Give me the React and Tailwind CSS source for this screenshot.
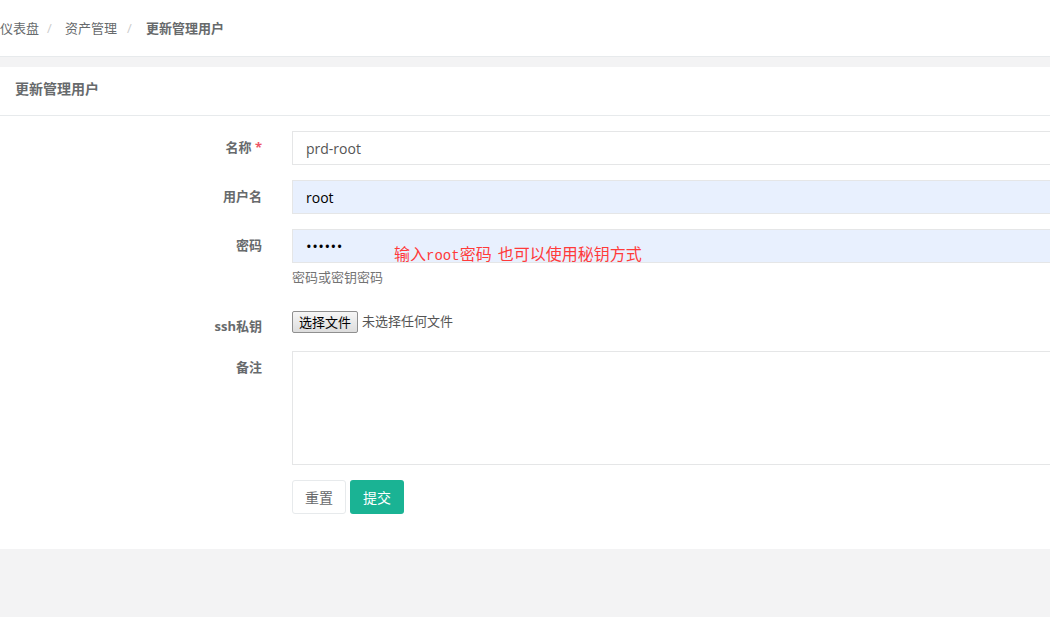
export default function App() {
  const font = { fontFamily: '"Open Sans", "Noto Sans CJK SC", sans-serif' };
  return (
    <div className="w-[1050px] h-[617px] overflow-hidden bg-[#f3f3f4] text-[#676a6c] text-[13px]" style={font}>
      {/* breadcrumb */}
      <div className="h-[57px] bg-white border-b border-[#e7eaec] flex items-center">
        <div className="flex items-center leading-[18px]">
          <span>仪表盘</span>
          <span className="w-[26px] pl-[8px] text-[#ccc]">/</span>
          <span>资产管理</span>
          <span className="w-[29px] pl-[10px] text-[#ccc]">/</span>
          <span className="font-bold">更新管理用户</span>
        </div>
      </div>

      <div className="mt-[10px] bg-white">
        <div className="h-[49px] border-b border-[#e7eaec] pt-[13px] px-[15px]">
          <div className="text-[14px] font-bold leading-[18px]">更新管理用户</div>
        </div>

        <div className="pt-[15px] pb-[35px] relative">
          <FormRow label={<>名称 <span className="text-[#ed5565]">*</span></>}>
            <div className="h-[34px] w-[800px] border border-[#e5e6e7] flex items-center px-[13px] text-[14px] text-[#555]">prd-root</div>
          </FormRow>
          <FormRow label="用户名">
            <div className="h-[34px] w-[800px] border border-[#e5e6e7] bg-[#e8f0fe] flex items-center px-[13px] text-[14px] text-black">root</div>
          </FormRow>
          <FormRow label="密码" mb="mb-[24px]">
            <div className="h-[34px] w-[800px] border border-[#e5e6e7] bg-[#e8f0fe] flex items-center px-[13px] text-[15px] text-black tracking-[0.5px]">••••••</div>
            <div className="mt-[5px] text-[13px] text-[#737373] leading-[18px]">密码或密钥密码</div>
          </FormRow>
          {/* annotation over the password field */}
          <div className="absolute left-[394px] top-[127px] text-[16px] leading-[20px] text-[#ff3a3a]" style={{ fontFamily: '"Noto Sans CJK SC", "Liberation Mono", monospace' }}>
            输入<span className="text-[14px]" style={{ fontFamily: '"Liberation Mono", monospace' }}>root</span>密码<span className="inline-block w-[6px]"></span>也可以使用秘钥方式
          </div>
          <FormRow label="ssh私钥" mb="mb-[16px]">
            <div className="h-[24px] flex items-center gap-[4px] text-[13px]">
              <span className="h-[22px] px-[6px] border border-[#8f8f8f] rounded-[2px] bg-gradient-to-b from-[#f6f6f6] to-[#dddddd] text-black flex items-center leading-none">选择文件</span>
              <span className="text-[#555]">未选择任何文件</span>
            </div>
          </FormRow>
          <FormRow label="备注">
            <div className="h-[114px] w-[800px] border border-[#e5e6e7]"></div>
          </FormRow>
          <div className="flex pl-[292px] gap-[4px]">
            <button className="h-[34px] w-[54px] border border-[#e7eaec] rounded-[3px] bg-white text-[14px] text-[#676a6c]">重置</button>
            <button className="h-[34px] w-[54px] rounded-[3px] bg-[#1ab394] text-[14px] text-white">提交</button>
          </div>
        </div>
      </div>
    </div>
  );
}

function FormRow({ label, children, mb = 'mb-[15px]', labelPt = 'pt-[7px]' }) {
  return (
    <div className={`flex ${mb}`}>
      <div className={`w-[262px] shrink-0 text-right font-bold leading-[18px] ${labelPt}`}>{label}</div>
      <div className="ml-[30px] shrink-0">{children}</div>
    </div>
  );
}
